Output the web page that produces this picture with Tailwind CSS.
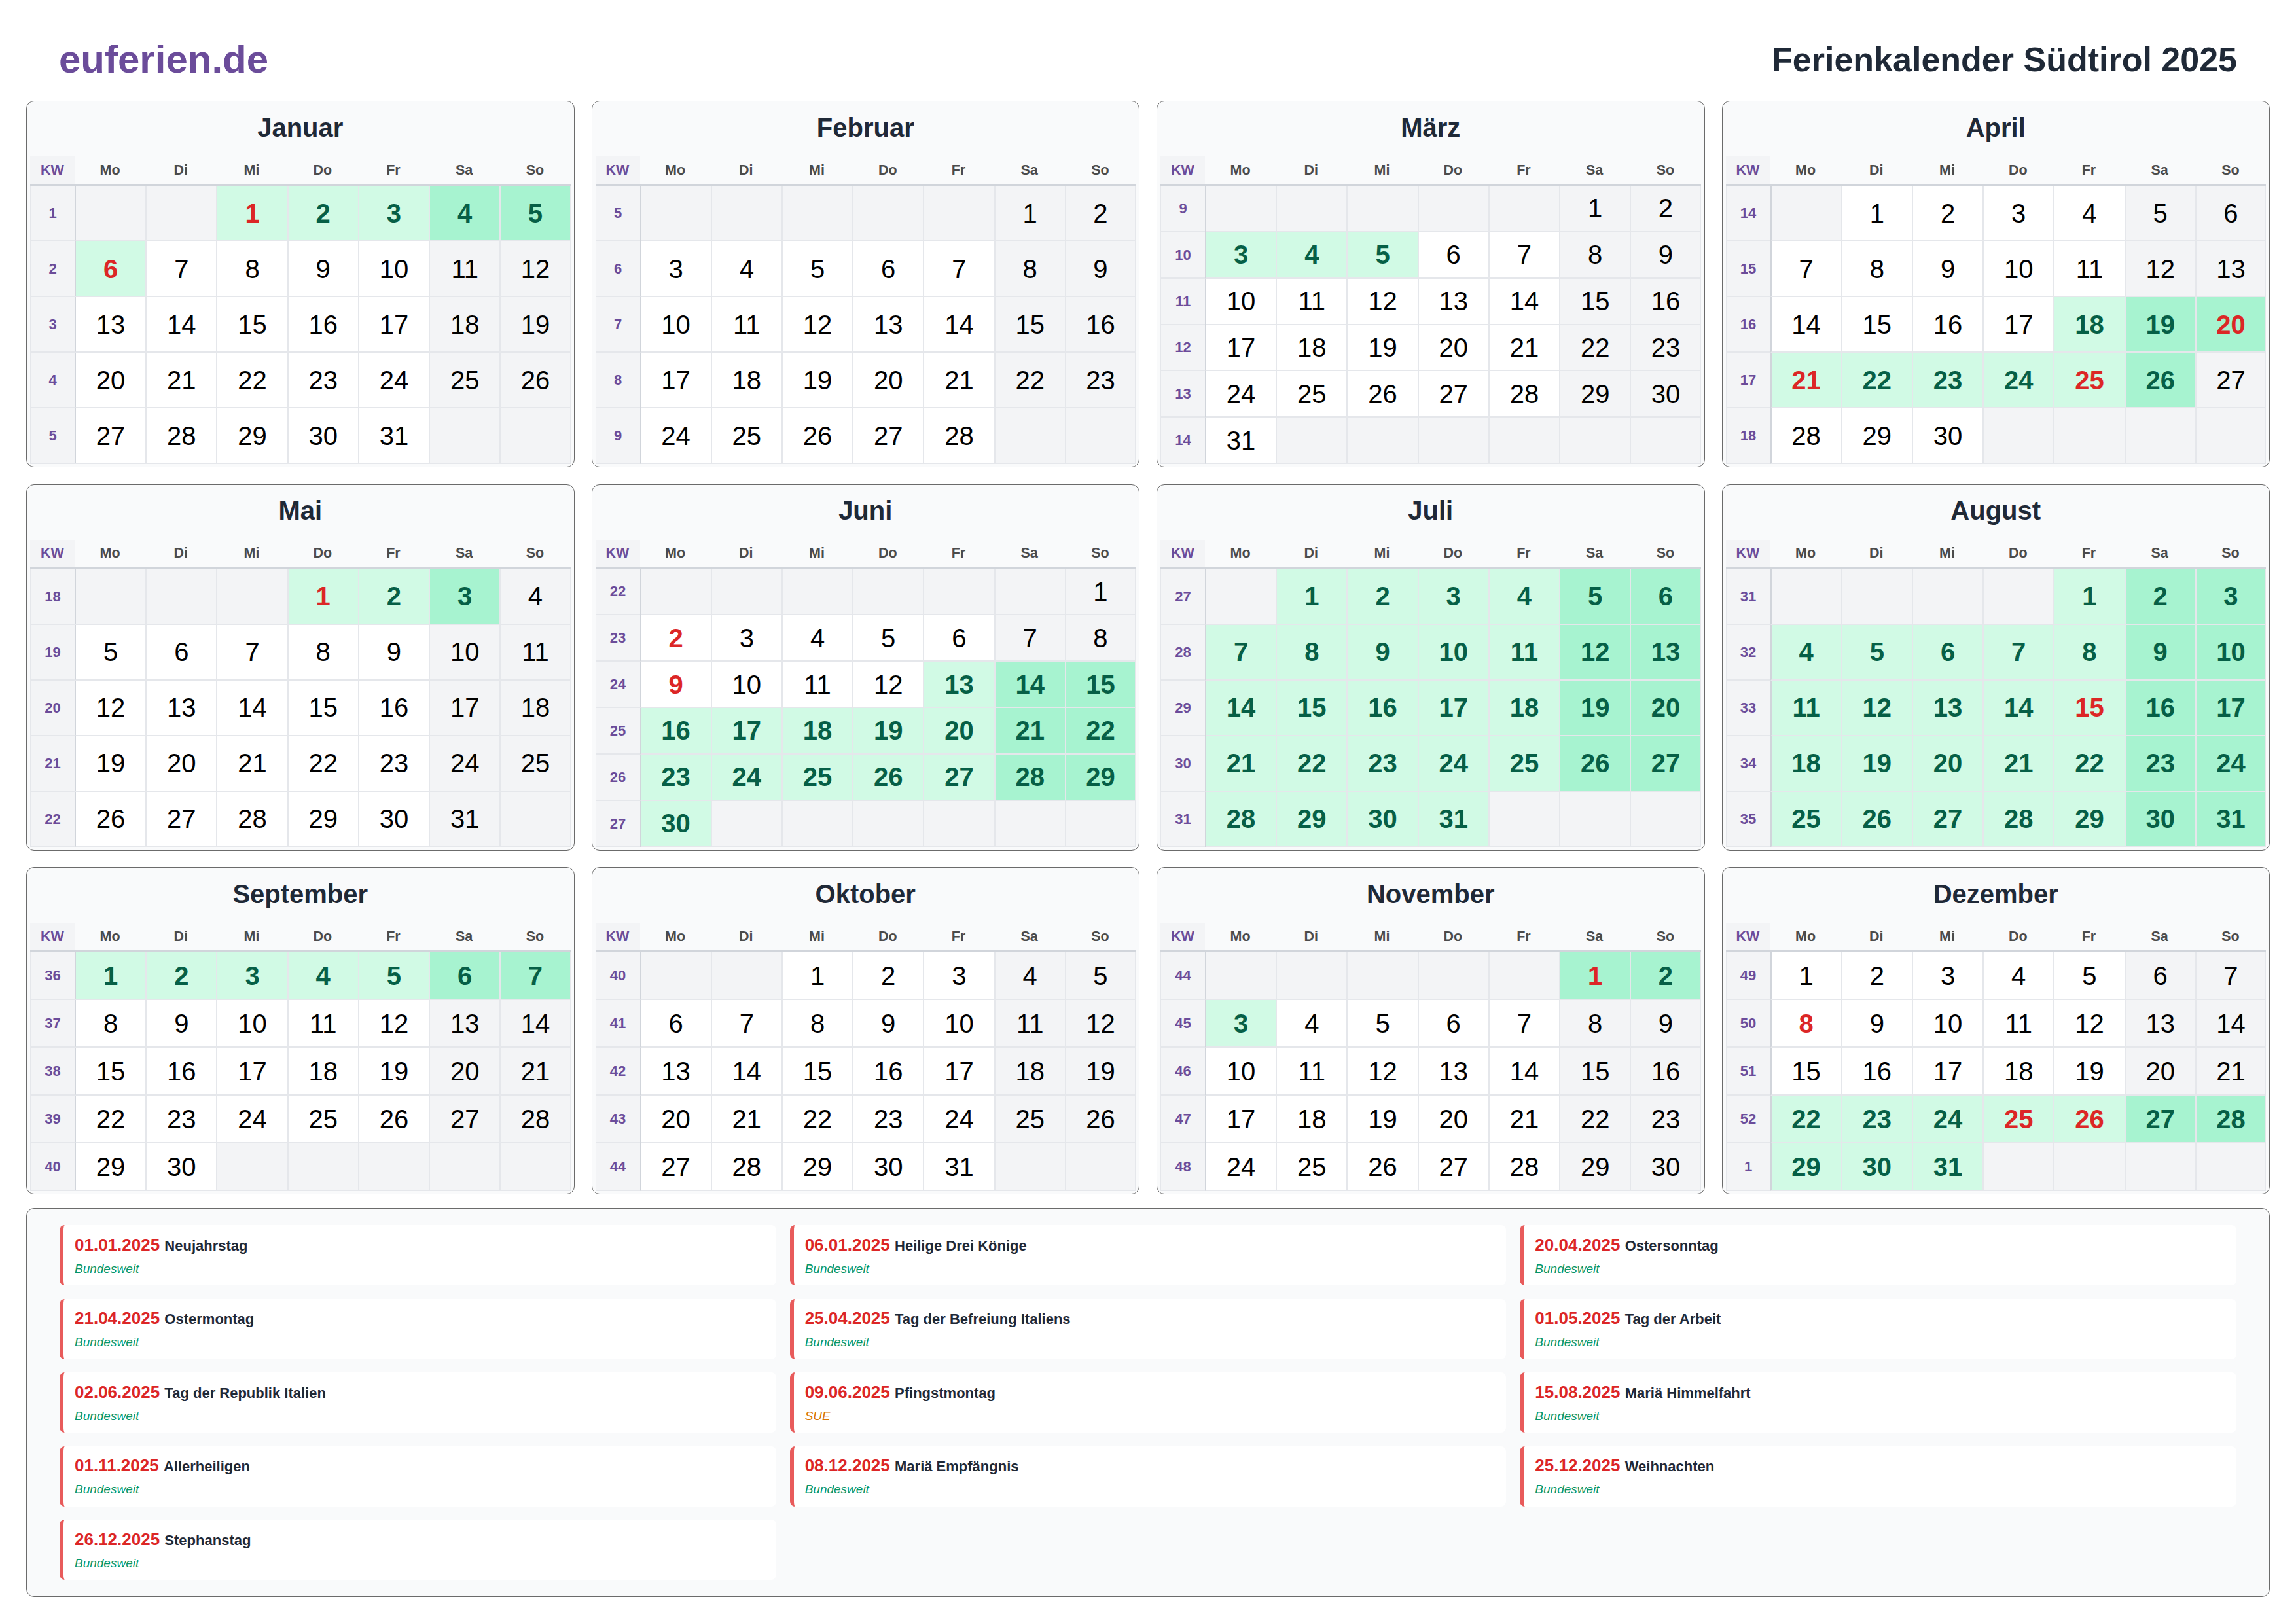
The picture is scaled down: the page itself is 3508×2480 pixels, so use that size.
<!DOCTYPE html>
<html lang="de">
<head>
    <meta charset="UTF-8">
    <title>Ferienkalender Südtirol 2025</title>
    <script src="https://cdn.jsdelivr.net/npm/@tailwindcss/browser@4"></script>
</head>
<body class="bg-white font-['Liberation_Sans',Arial,sans-serif]">
    <div class="w-[3508px] h-[2480px] px-[40px] flex flex-col">
        <!-- Header -->
        <div class="h-[154px] flex items-center justify-between px-[50px] pt-[28px] shrink-0">
            <div class="text-[60px] leading-none font-bold text-[#6b4c9a]">euferien.de</div>
            <div class="text-[52px] leading-none font-bold text-[#1f2937]">Ferienkalender Südtirol 2025</div>
        </div>

        <!-- Months -->
        <div id="months" class="grid grid-cols-4 grid-rows-[560px_560px_500px] gap-x-[26px] gap-y-[25.5px] shrink-0"></div>

        <!-- Holidays -->
        <div class="mt-[21px] h-[594px] border border-[#6b6b6b] rounded-[12px] bg-[#f9fafb] px-[50px] py-[25px]">
            <div id="holidays" class="h-full grid grid-cols-3 grid-rows-5 gap-x-[21px] gap-y-[20.5px]"></div>
        </div>
    </div>

    <script>
        const monthNames = ['Januar', 'Februar', 'März', 'April', 'Mai', 'Juni', 'Juli', 'August', 'September', 'Oktober', 'November', 'Dezember'];
        const dayNames = ['Mo', 'Di', 'Mi', 'Do', 'Fr', 'Sa', 'So'];

        // school holidays per month: [from, to]
        const ferien = {
            0: [[1, 6]],
            2: [[3, 5]],
            3: [[18, 26]],
            4: [[1, 3]],
            5: [[13, 30]],
            6: [[1, 31]],
            7: [[1, 31]],
            8: [[1, 7]],
            10: [[1, 3]],
            11: [[22, 31]]
        };

        const holidays = [
            ['01.01.2025', 'Neujahrstag', 'Bundesweit'],
            ['06.01.2025', 'Heilige Drei Könige', 'Bundesweit'],
            ['20.04.2025', 'Ostersonntag', 'Bundesweit'],
            ['21.04.2025', 'Ostermontag', 'Bundesweit'],
            ['25.04.2025', 'Tag der Befreiung Italiens', 'Bundesweit'],
            ['01.05.2025', 'Tag der Arbeit', 'Bundesweit'],
            ['02.06.2025', 'Tag der Republik Italien', 'Bundesweit'],
            ['09.06.2025', 'Pfingstmontag', 'SUE'],
            ['15.08.2025', 'Mariä Himmelfahrt', 'Bundesweit'],
            ['01.11.2025', 'Allerheiligen', 'Bundesweit'],
            ['08.12.2025', 'Mariä Empfängnis', 'Bundesweit'],
            ['25.12.2025', 'Weihnachten', 'Bundesweit'],
            ['26.12.2025', 'Stephanstag', 'Bundesweit']
        ];

        const holidaySet = new Set(holidays.map(h => h[0]));

        function isoWeek(date) {
            const d = new Date(Date.UTC(date.getFullYear(), date.getMonth(), date.getDate()));
            const day = d.getUTCDay() || 7;
            d.setUTCDate(d.getUTCDate() + 4 - day);
            const yearStart = new Date(Date.UTC(d.getUTCFullYear(), 0, 1));
            return Math.ceil(((d - yearStart) / 86400000 + 1) / 7);
        }

        function inFerien(month, day) {
            return (ferien[month] || []).some(r => day >= r[0] && day <= r[1]);
        }

        function separators(col) {
            if (col === 0) return 'border-l-2 border-l-[#d1d5db]';
            if (col === 6) return 'border-l-2 border-l-[#e5e7eb] border-r border-r-[#e5e7eb]';
            return 'border-l-2 border-l-[#e5e7eb]';
        }

        function dayCell(month, day, col) {
            const weekend = col >= 5;
            const sep = separators(col);
            if (!day) return `<div class="bg-[#f3f4f6] border-b-2 border-b-[#e5e7eb] ${sep}"></div>`;

            const key = String(day).padStart(2, '0') + '.' + String(month + 1).padStart(2, '0') + '.2025';
            const isHoliday = holidaySet.has(key);
            const isFerien = inFerien(month, day);

            let bg = weekend ? 'bg-[#f3f4f6]' : 'bg-white';
            let text = 'text-black';
            if (isFerien) {
                bg = weekend ? 'bg-[#a7f3d0]' : 'bg-[#d1fae5]';
                text = 'text-[#065f46] font-bold';
            }
            if (isHoliday) text = 'text-[#dc2626] font-bold';

            return `<div class="flex items-center justify-center text-[40px] leading-none border-b-2 border-b-[#e5e7eb] ${sep} ${bg} ${text}">${day}</div>`;
        }

        function monthCard(month) {
            const first = new Date(2025, month, 1);
            const total = new Date(2025, month + 1, 0).getDate();
            const offset = (first.getDay() + 6) % 7;
            const rows = Math.ceil((offset + total) / 7);

            let cells = '<div class="flex items-center justify-center bg-[#f3f4f6] text-[21.5px] font-bold text-[#6b4c9a] border-b-[3px] border-b-[#d1d5db]">KW</div>';
            dayNames.forEach(d => {
                cells += `<div class="flex items-center justify-center text-[21.5px] font-bold text-[#4b4b4b] border-b-[3px] border-b-[#d1d5db]">${d}</div>`;
            });

            for (let r = 0; r < rows; r++) {
                const monday = new Date(2025, month, 1 - offset + r * 7);
                cells += `<div class="flex items-center justify-center bg-[#f3f4f6] text-[22px] font-bold text-[#6b4c9a] border-b-2 border-b-[#e5e7eb] border-l border-l-[#e5e7eb]">${isoWeek(monday)}</div>`;
                for (let c = 0; c < 7; c++) {
                    const n = r * 7 + c - offset + 1;
                    cells += dayCell(month, n >= 1 && n <= total ? n : 0, c);
                }
            }

            const rowClass = rows === 6 ? 'grid-rows-[45px_repeat(6,1fr)]' : 'grid-rows-[45px_repeat(5,1fr)]';
            return `<div class="flex flex-col min-h-0 border border-[#6b6b6b] rounded-[12px] bg-[#f9fafb] px-[5px] pb-[4px]">
                <div class="h-[84px] pb-[5px] shrink-0 flex items-center justify-center text-[40px] leading-none font-bold text-[#1f2937]">${monthNames[month]}</div>
                <div class="flex-1 min-h-0 grid grid-cols-[68px_repeat(7,1fr)] ${rowClass}">${cells}</div>
            </div>`;
        }

        document.getElementById('months').innerHTML = monthNames.map((_, i) => monthCard(i)).join('');

        document.getElementById('holidays').innerHTML = holidays.map(h => {
            const region = h[2] === 'SUE' ? 'text-[#d97706]' : 'text-[#059669]';
            return `<div class="bg-white rounded-[8px] border-l-[6px] border-l-[#e85b5b] pl-[17px] flex flex-col justify-center gap-[14px]">
                <div class="leading-none font-bold"><span class="text-[26px] text-[#dc2626]">${h[0]} </span><span class="text-[22px] text-[#1f2937]">${h[1]}</span></div>
                <div class="text-[19px] leading-none italic ${region}">${h[2]}</div>
            </div>`;
        }).join('');
    </script>
</body>
</html>
